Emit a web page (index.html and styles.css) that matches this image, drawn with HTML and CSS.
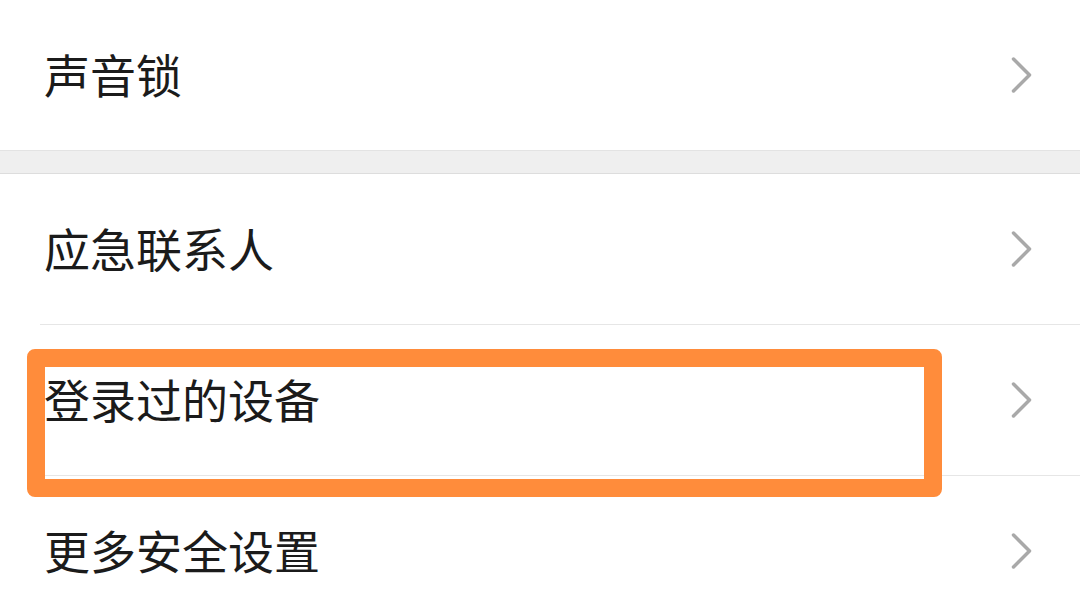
FILE: index.html
```html
<!DOCTYPE html>
<html>

<head>
  <meta charset="utf-8">
  <link rel="stylesheet" href="styles.css">
</head>

<body>

<div class="settings-list">
  <div class="group">
    <div class="row">
      <span class="row-label">声音锁</span>
      <svg class="chevron" viewBox="0 0 20 36"><path d="M2 2 L18 18 L2 34"/></svg>
    </div>
  </div>

  <div class="spacer"></div>

  <div class="group">
    <div class="row">
      <span class="row-label">应急联系人</span>
      <svg class="chevron" viewBox="0 0 20 36"><path d="M2 2 L18 18 L2 34"/></svg>
    </div>
    <div class="row">
      <span class="row-label">登录过的设备</span>
      <svg class="chevron" viewBox="0 0 20 36"><path d="M2 2 L18 18 L2 34"/></svg>
    </div>
    <div class="row">
      <span class="row-label">更多安全设置</span>
      <svg class="chevron" viewBox="0 0 20 36"><path d="M2 2 L18 18 L2 34"/></svg>
    </div>
  </div>
</div>

<div class="highlight"></div>

</body>

</html>
```

FILE: styles.css
```css
html, body {
  margin: 0;
  height: 100%;
  overflow: hidden;
  background: #ffffff;
}

body {
  position: relative;
  font-family: "Noto Sans CJK SC", "Noto Sans", sans-serif;
  color: #1b1b1b;
}

.group {
  background: #ffffff;
}

.row {
  display: flex;
  align-items: center;
  justify-content: space-between;
  height: 150px;
  margin-left: 40px;
  padding-left: 4px;
  padding-right: 48px;
  border-bottom: 1px solid #e6e6e6;
}

.row:last-child {
  border-bottom: none;
}

.row-label {
  font-size: 46px;
  line-height: 1;
  padding-bottom: 4px;
}

.chevron {
  width: 21px;
  height: 36px;
  fill: none;
  stroke: #a9a9a9;
  stroke-width: 3.5;
  stroke-linecap: round;
  stroke-linejoin: round;
}

.spacer {
  height: 22px;
  background: #efefef;
  border-top: 1px solid #e3e3e3;
  border-bottom: 1px solid #dddddd;
}

.highlight {
  position: absolute;
  left: 27px;
  top: 349px;
  width: 879px;
  height: 112px;
  border: 18px solid #ff8c3b;
  border-radius: 8px;
}
```
